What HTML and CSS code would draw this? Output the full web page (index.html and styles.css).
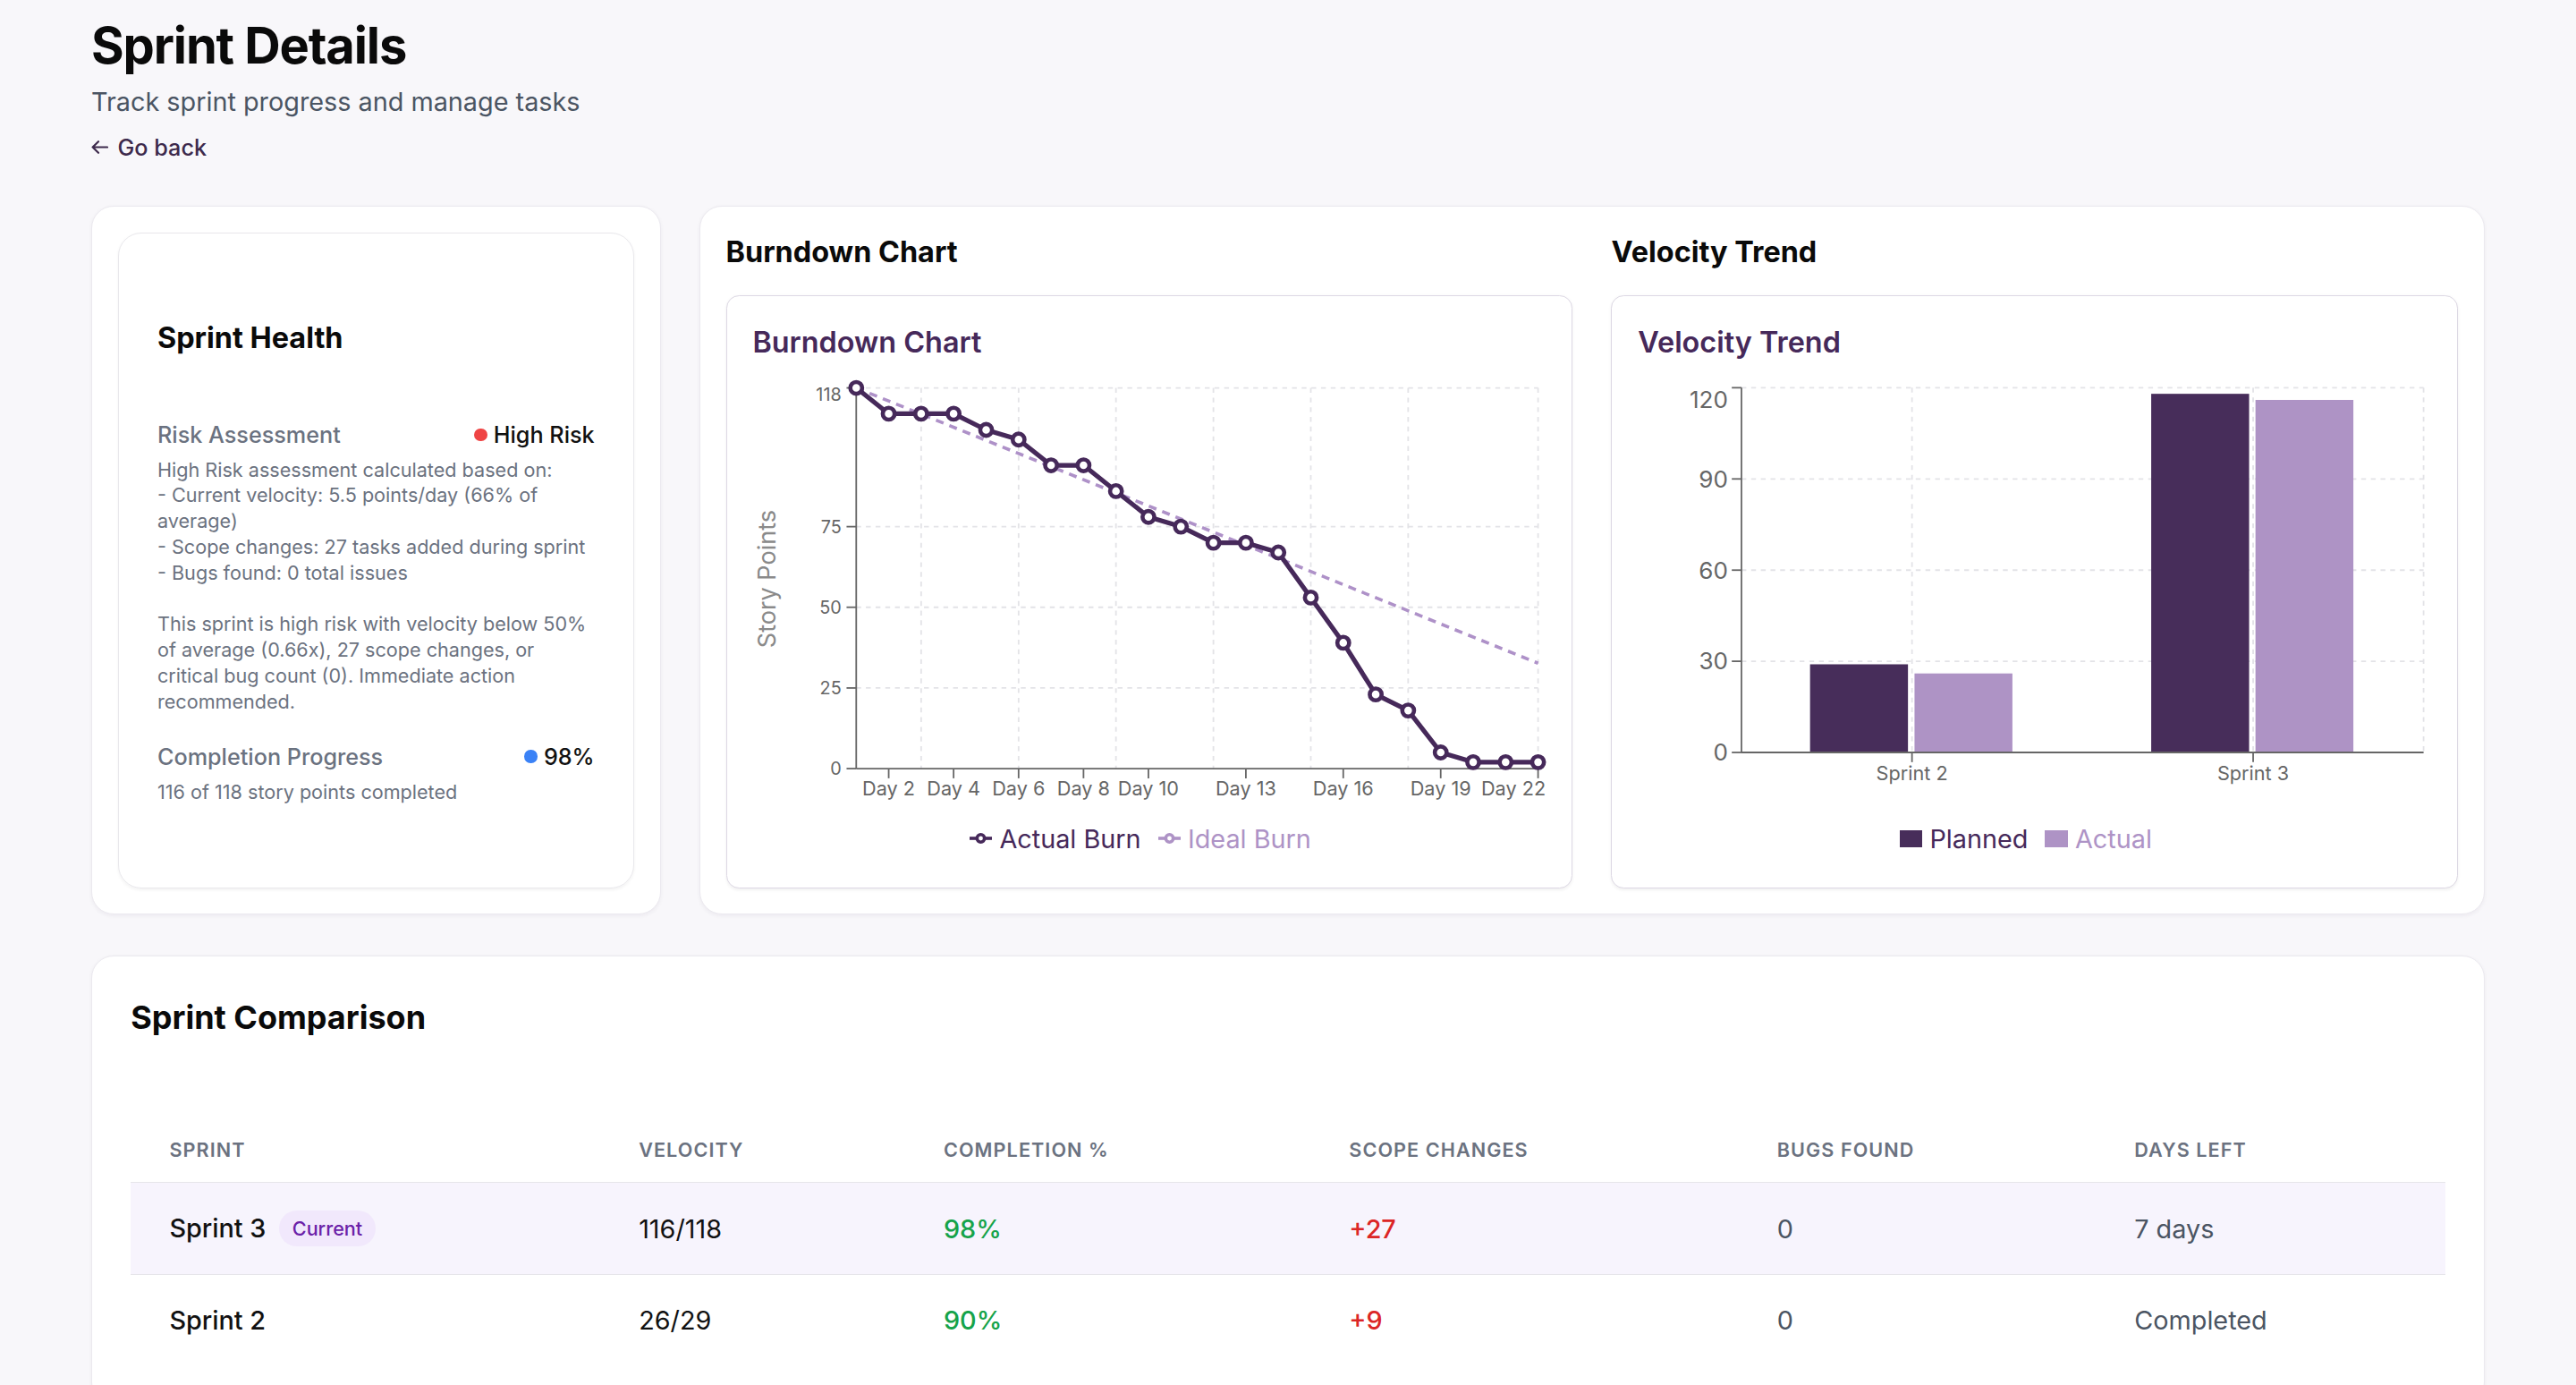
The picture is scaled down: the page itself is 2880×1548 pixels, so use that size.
FILE: index.html
```html
<!DOCTYPE html>
<html lang="en">
<head>
<meta charset="utf-8">
<title>Sprint Details</title>
<link rel="stylesheet" href="styles.css">
</head>
<body>
<main class="page">
  <header class="page-header">
    <h1 class="page-title">Sprint Details</h1>
    <p class="page-subtitle">Track sprint progress and manage tasks</p>
    <a class="back-link" href="#">
      <svg class="back-icon" viewBox="0 0 19 15" aria-hidden="true"><path d="M8 1.2 L1.6 7.5 L8 13.8 M1.6 7.5 H18"/></svg>
      <span>Go back</span>
    </a>
  </header>

  <section class="top-grid">
    <div class="card health-wrap">
      <div class="health-card">
        <h2 class="card-heading health-heading">Sprint Health</h2>
        <div class="health-row">
          <span class="health-label">Risk Assessment</span>
          <span class="status"><span class="dot dot-red"></span>High Risk</span>
        </div>
        <p class="health-text">High Risk assessment calculated based on:
- Current velocity: 5.5 points/day (66% of average)
- Scope changes: 27 tasks added during sprint
- Bugs found: 0 total issues

This sprint is high risk with velocity below 50% of average (0.66x), 27 scope changes, or critical bug count (0). Immediate action recommended.</p>
        <div class="health-row completion">
          <span class="health-label">Completion Progress</span>
          <span class="status"><span class="dot dot-blue"></span>98%</span>
        </div>
        <p class="health-sub">116 of 118 story points completed</p>
      </div>
    </div>

    <div class="card charts-card">
      <div class="chart-col">
        <h2 class="card-heading chart-heading">Burndown Chart</h2>
        <div class="chart-card">
          <h3 class="chart-title">Burndown Chart</h3>
          <svg class="chart-svg" viewBox="0 0 885 500" role="img" aria-label="Burndown chart">
            <g class="grid">
              <line x1="116" y1="21.5" x2="876.5" y2="21.5"/>
              <line x1="116" y1="176.2" x2="876.5" y2="176.2"/>
              <line x1="116" y1="266.1" x2="876.5" y2="266.1"/>
              <line x1="116" y1="356.1" x2="876.5" y2="356.1"/>
              <line x1="188.4" y1="21.5" x2="188.4" y2="446"/>
              <line x1="297.1" y1="21.5" x2="297.1" y2="446"/>
              <line x1="405.7" y1="21.5" x2="405.7" y2="446"/>
              <line x1="514.4" y1="21.5" x2="514.4" y2="446"/>
              <line x1="623" y1="21.5" x2="623" y2="446"/>
              <line x1="731.6" y1="21.5" x2="731.6" y2="446"/>
              <line x1="876.5" y1="21.5" x2="876.5" y2="446"/>
            </g>
            <g class="axis">
              <line x1="116" y1="21.5" x2="116" y2="446"/>
              <line x1="116" y1="446" x2="876.5" y2="446"/>
              <line x1="105.2" y1="446" x2="116" y2="446"/>
              <line x1="105.2" y1="356.1" x2="116" y2="356.1"/>
              <line x1="105.2" y1="266.1" x2="116" y2="266.1"/>
              <line x1="105.2" y1="176.2" x2="116" y2="176.2"/>
              <line x1="105.2" y1="21.5" x2="116" y2="21.5"/>
              <line x1="152.2" y1="446" x2="152.2" y2="456.8"/>
              <line x1="224.6" y1="446" x2="224.6" y2="456.8"/>
              <line x1="297.1" y1="446" x2="297.1" y2="456.8"/>
              <line x1="369.5" y1="446" x2="369.5" y2="456.8"/>
              <line x1="441.9" y1="446" x2="441.9" y2="456.8"/>
              <line x1="550.6" y1="446" x2="550.6" y2="456.8"/>
              <line x1="659.2" y1="446" x2="659.2" y2="456.8"/>
              <line x1="767.9" y1="446" x2="767.9" y2="456.8"/>
              <line x1="876.5" y1="446" x2="876.5" y2="456.8"/>
            </g>
            <g class="tick-y">
              <text x="99.5" y="36">118</text>
              <text x="99.5" y="183.3">75</text>
              <text x="99.5" y="273.2">50</text>
              <text x="99.5" y="363.2">25</text>
              <text x="99.5" y="453.1">0</text>
            </g>
            <g class="tick-x">
              <text x="152.2" y="475.5">Day 2</text>
              <text x="224.6" y="475.5">Day 4</text>
              <text x="297.1" y="475.5">Day 6</text>
              <text x="369.5" y="475.5">Day 8</text>
              <text x="441.9" y="475.5">Day 10</text>
              <text x="550.6" y="475.5">Day 13</text>
              <text x="659.2" y="475.5">Day 16</text>
              <text x="767.9" y="475.5">Day 19</text>
              <text x="885" y="475.5" class="end">Day 22</text>
            </g>
            <text class="axis-label" transform="translate(25.5 234.5) rotate(-90)">Story Points</text>
            <line class="ideal" x1="116" y1="21.5" x2="876.5" y2="328.5"/>
            <polyline class="actual" points="116,21.5 152.2,50.3 188.4,50.3 224.6,50.3 260.9,68.3 297.1,79.1 333.3,107.8 369.5,107.8 405.7,136.6 441.9,165.4 478.1,176.2 514.4,194.2 550.6,194.2 586.8,205 623,255.3 659.2,305.7 695.4,363.3 731.6,381.2 767.9,428 804.1,438.8 840.3,438.8 876.5,438.8"/>
            <g class="dots">
              <circle cx="116" cy="21.5" r="6.6"/>
              <circle cx="152.2" cy="50.3" r="6.6"/>
              <circle cx="188.4" cy="50.3" r="6.6"/>
              <circle cx="224.6" cy="50.3" r="6.6"/>
              <circle cx="260.9" cy="68.3" r="6.6"/>
              <circle cx="297.1" cy="79.1" r="6.6"/>
              <circle cx="333.3" cy="107.8" r="6.6"/>
              <circle cx="369.5" cy="107.8" r="6.6"/>
              <circle cx="405.7" cy="136.6" r="6.6"/>
              <circle cx="441.9" cy="165.4" r="6.6"/>
              <circle cx="478.1" cy="176.2" r="6.6"/>
              <circle cx="514.4" cy="194.2" r="6.6"/>
              <circle cx="550.6" cy="194.2" r="6.6"/>
              <circle cx="586.8" cy="205" r="6.6"/>
              <circle cx="623" cy="255.3" r="6.6"/>
              <circle cx="659.2" cy="305.7" r="6.6"/>
              <circle cx="695.4" cy="363.3" r="6.6"/>
              <circle cx="731.6" cy="381.2" r="6.6"/>
              <circle cx="767.9" cy="428" r="6.6"/>
              <circle cx="804.1" cy="438.8" r="6.6"/>
              <circle cx="840.3" cy="438.8" r="6.6"/>
              <circle cx="876.5" cy="438.8" r="6.6"/>
            </g>
          </svg>
          <div class="legend">
            <span class="legend-item legend-dark">
              <svg class="legend-line" viewBox="0 0 25 14" aria-hidden="true"><line x1="0" y1="7" x2="25" y2="7"/><circle cx="12.5" cy="7" r="4.2"/></svg>
              Actual Burn
            </span>
            <span class="legend-item legend-light">
              <svg class="legend-line" viewBox="0 0 25 14" aria-hidden="true"><line x1="0" y1="7" x2="25" y2="7"/><circle cx="12.5" cy="7" r="4.2"/></svg>
              Ideal Burn
            </span>
          </div>
        </div>
      </div>

      <div class="chart-col">
        <h2 class="card-heading chart-heading">Velocity Trend</h2>
        <div class="chart-card">
          <h3 class="chart-title">Velocity Trend</h3>
          <svg class="chart-svg" viewBox="0 0 885 500" role="img" aria-label="Velocity trend chart">
            <g class="grid">
              <line x1="115.7" y1="21.3" x2="876.5" y2="21.3"/>
              <line x1="115.7" y1="123" x2="876.5" y2="123"/>
              <line x1="115.7" y1="224.7" x2="876.5" y2="224.7"/>
              <line x1="115.7" y1="326.3" x2="876.5" y2="326.3"/>
              <line x1="305.9" y1="21.3" x2="305.9" y2="428"/>
              <line x1="686.4" y1="21.3" x2="686.4" y2="428"/>
              <line x1="876.5" y1="21.3" x2="876.5" y2="428"/>
            </g>
            <g class="bars">
              <rect class="bar-planned" x="192.2" y="329.7" width="109.2" height="98.3"/>
              <rect class="bar-actual" x="308.7" y="339.9" width="109.2" height="88.1"/>
              <rect class="bar-planned" x="572.7" y="28.1" width="109.2" height="399.9"/>
              <rect class="bar-actual" x="689" y="34.9" width="109.2" height="393.1"/>
            </g>
            <g class="axis">
              <line x1="115.7" y1="21.3" x2="115.7" y2="428"/>
              <line x1="115.7" y1="428" x2="876.5" y2="428"/>
              <line x1="104.9" y1="428" x2="115.7" y2="428"/>
              <line x1="104.9" y1="326.3" x2="115.7" y2="326.3"/>
              <line x1="104.9" y1="224.7" x2="115.7" y2="224.7"/>
              <line x1="104.9" y1="123" x2="115.7" y2="123"/>
              <line x1="104.9" y1="21.3" x2="115.7" y2="21.3"/>
              <line x1="305.9" y1="428" x2="305.9" y2="438.8"/>
              <line x1="686.4" y1="428" x2="686.4" y2="438.8"/>
            </g>
            <g class="tick-y big">
              <text x="100.7" y="43.4">120</text>
              <text x="100.7" y="132.4">90</text>
              <text x="100.7" y="234.1">60</text>
              <text x="100.7" y="335.7">30</text>
              <text x="100.7" y="437.4">0</text>
            </g>
            <g class="tick-x">
              <text x="305.9" y="458.5">Sprint 2</text>
              <text x="686.4" y="458.5">Sprint 3</text>
            </g>
          </svg>
          <div class="legend">
            <span class="legend-item legend-dark"><span class="legend-rect rect-dark"></span>Planned</span>
            <span class="legend-item legend-light"><span class="legend-rect rect-light"></span>Actual</span>
          </div>
        </div>
      </div>
    </div>
  </section>

  <section class="card compare-card">
    <h2 class="compare-heading">Sprint Comparison</h2>
    <div class="table-wrap">
      <table class="compare-table">
        <colgroup>
          <col class="c-sprint"><col class="c-velocity"><col class="c-completion"><col class="c-scope"><col class="c-bugs"><col class="c-days">
        </colgroup>
        <thead>
          <tr>
            <th>Sprint</th>
            <th>Velocity</th>
            <th>Completion %</th>
            <th>Scope Changes</th>
            <th>Bugs Found</th>
            <th>Days Left</th>
          </tr>
        </thead>
        <tbody>
          <tr class="current">
            <td class="name">Sprint 3<span class="badge">Current</span></td>
            <td class="velocity">116/118</td>
            <td class="good">98%</td>
            <td class="bad">+27</td>
            <td class="muted">0</td>
            <td class="muted">7 days</td>
          </tr>
          <tr>
            <td class="name">Sprint 2</td>
            <td class="velocity">26/29</td>
            <td class="good">90%</td>
            <td class="bad">+9</td>
            <td class="muted">0</td>
            <td class="muted">Completed</td>
          </tr>
        </tbody>
      </table>
    </div>
  </section>
</main>
</body>
</html>
```

FILE: styles.css
```css
* {
  box-sizing: border-box;
  margin: 0;
  padding: 0;
}

html,
body {
  background: #f8f7fa;
}

body {
  font-family: Inter, "Noto Sans", sans-serif;
  color: #0a0a0a;
}

.page {
  padding: 15px 102px 80px;
}

/* Header */
.page-header {
  display: flex;
  flex-direction: column;
  align-items: flex-start;
}

.page-title {
  font-size: 56px;
  line-height: 72px;
  font-weight: 700;
  letter-spacing: -0.02em;
}

.page-subtitle {
  margin-top: 5px;
  font-size: 28.8px;
  line-height: 43.2px;
  color: #4b5563;
}

.back-link {
  margin-top: 11.6px;
  display: inline-flex;
  align-items: center;
  gap: 10.5px;
  font-size: 25.2px;
  line-height: 36px;
  font-weight: 500;
  color: #3d2a4c;
  text-decoration: none;
}

.back-icon {
  width: 19px;
  height: 15px;
  fill: none;
  stroke: #3d2a4c;
  stroke-width: 2.2;
  stroke-linecap: round;
  stroke-linejoin: round;
}

/* Cards */
.card {
  background: #ffffff;
  border: 1.8px solid #ebe9ef;
  border-radius: 25px;
  box-shadow: 0 1.8px 4px rgba(30, 20, 50, 0.05);
}

.card-heading {
  font-size: 32.4px;
  line-height: 43.2px;
  font-weight: 700;
  color: #0a0a0a;
}

.top-grid {
  margin-top: 47.2px;
  display: grid;
  grid-template-columns: repeat(4, minmax(0, 1fr));
  gap: 43.2px;
}

/* Sprint health */
.health-wrap {
  padding: 28.8px;
  display: flex;
  flex-direction: column;
}

.health-card {
  flex: 1;
  border: 1.8px solid #e9e8ec;
  border-radius: 26px;
  padding: 94.8px 43.2px 43.2px;
  box-shadow: 0 1.8px 3.6px rgba(0, 0, 0, 0.05);
}

.health-heading {
  margin-bottom: 69.5px;
}

.health-row {
  display: flex;
  justify-content: space-between;
  align-items: center;
  line-height: 36px;
}

.health-row.completion {
  margin-top: 29px;
}

.health-label {
  font-size: 25.2px;
  font-weight: 500;
  color: #6b7280;
}

.status {
  display: flex;
  align-items: center;
  gap: 7.2px;
  font-size: 25.2px;
  font-weight: 500;
  color: #111111;
}

.dot {
  width: 14.4px;
  height: 14.4px;
  border-radius: 50%;
}

.dot-red {
  background: #ef4444;
}

.dot-blue {
  background: #3b82f6;
}

.health-text {
  margin-top: 6.4px;
  font-size: 21.6px;
  line-height: 28.8px;
  color: #6b7280;
  white-space: pre-line;
}

.health-sub {
  margin-top: 7.2px;
  font-size: 21.6px;
  line-height: 28.8px;
  color: #6b7280;
}

/* Charts */
.charts-card {
  grid-column: span 3;
  padding: 28.8px;
  display: grid;
  grid-template-columns: repeat(2, minmax(0, 1fr));
  gap: 43.2px;
}

.chart-heading {
  margin-bottom: 27.2px;
}

.chart-card {
  border: 1.8px solid #ddd8e4;
  border-radius: 14.4px;
  padding: 30px 28.8px 27.6px;
  background: #ffffff;
  box-shadow: 0 1.8px 3.6px rgba(0, 0, 0, 0.06);
}

.chart-title {
  font-size: 32.4px;
  line-height: 43.2px;
  font-weight: 600;
  color: #46295a;
}

.chart-svg {
  display: block;
  margin-top: 8px;
  width: 100%;
  height: auto;
  overflow: visible;
}

.grid line {
  stroke: #e3e3e7;
  stroke-width: 1.8;
  stroke-dasharray: 5.4 5.4;
}

.axis line {
  stroke: #666666;
  stroke-width: 1.8;
}

.tick-y text {
  font-family: Inter, sans-serif;
  font-size: 19.8px;
  fill: #666666;
  text-anchor: end;
}

.tick-y.big text {
  font-size: 26px;
}

.tick-x text {
  font-family: Inter, sans-serif;
  font-size: 21.6px;
  fill: #666666;
  text-anchor: middle;
}

.tick-x text.end {
  text-anchor: end;
}

.axis-label {
  font-family: Inter, sans-serif;
  font-size: 27px;
  fill: #8a8a8a;
  text-anchor: middle;
}

.ideal {
  stroke: #ae91c8;
  stroke-width: 3.6;
  stroke-dasharray: 9 7;
}

.actual {
  fill: none;
  stroke: #46295a;
  stroke-width: 5.2;
  stroke-linejoin: round;
}

.dots circle {
  fill: #ffffff;
  stroke: #46295a;
  stroke-width: 4.6;
}

.bar-planned {
  fill: #472d5a;
}

.bar-actual {
  fill: #ae93c5;
}

.legend {
  display: flex;
  justify-content: center;
  gap: 19px;
  margin-top: -3px;
  padding: 0 20px 0 0;
  height: 53.5px;
  font-size: 28.8px;
  line-height: 43.2px;
}

.legend-item {
  display: flex;
  align-items: center;
  gap: 8.4px;
}

.legend-dark {
  color: #46295a;
}

.legend-light {
  color: #ae93c6;
}

.legend-line {
  width: 25px;
  height: 14px;
  fill: #ffffff;
  stroke: currentColor;
  stroke-width: 3.6;
}

.legend-rect {
  width: 25.2px;
  height: 18.9px;
}

.rect-dark {
  background: #472d5a;
}

.rect-light {
  background: #ae93c5;
}

/* Comparison table */
.compare-card {
  margin-top: 45.3px;
  padding: 43px 43.2px 43.2px;
}

.compare-heading {
  font-size: 36px;
  line-height: 50.4px;
  font-weight: 700;
  color: #0a0a0a;
}

.table-wrap {
  margin-top: 87px;
}

.compare-table {
  width: 100%;
  border-collapse: collapse;
  table-layout: fixed;
}

.c-sprint { width: 20.28%; }
.c-velocity { width: 13.17%; }
.c-completion { width: 17.52%; }
.c-scope { width: 18.49%; }
.c-bugs { width: 15.44%; }
.c-days { width: 15.1%; }

.compare-table th {
  padding: 21.6px 43.2px;
  text-align: left;
  font-size: 21.6px;
  line-height: 28.8px;
  font-weight: 600;
  letter-spacing: 0.05em;
  text-transform: uppercase;
  color: #6b7280;
}

.compare-table thead tr,
.compare-table tbody tr {
  border-bottom: 1.8px solid #e6e5ea;
}

.compare-table tbody tr:last-child {
  border-bottom: none;
}

.compare-table td {
  padding: 28.8px 43.2px;
  font-size: 28.8px;
  line-height: 43.2px;
  color: #111111;
  white-space: nowrap;
}

.compare-table tr.current {
  background: #f7f4fd;
}

.compare-table td.name {
  font-weight: 500;
}

.compare-table td.good {
  color: #16a34a;
  font-weight: 500;
}

.compare-table td.bad {
  color: #dc2626;
  font-weight: 500;
}

.compare-table td.muted {
  color: #4b5563;
}

.badge {
  display: inline-block;
  vertical-align: middle;
  margin-left: 14.4px;
  padding: 6px 15px;
  border-radius: 999px;
  background: #f1e8fc;
  color: #6b21a8;
  font-size: 21.6px;
  line-height: 28.8px;
  font-weight: 500;
  position: relative;
  top: -2px;
}
```
